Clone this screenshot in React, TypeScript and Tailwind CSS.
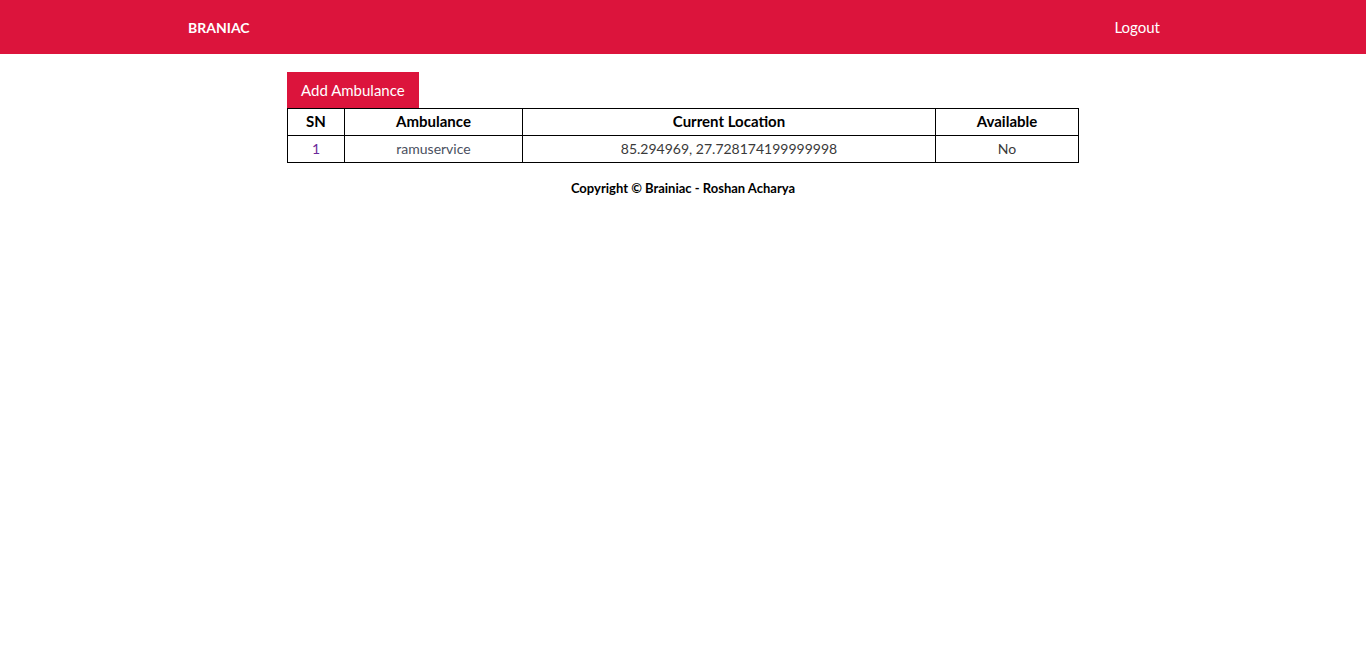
export default function App() {
  return (
    <div className="min-h-[665px] bg-white font-['Lato','Noto_Sans',sans-serif] text-black">
      <header className="flex h-[54px] items-center justify-between bg-[#dc143c] pl-[188px] pr-[206px] text-white">
        <span className="text-[14px] font-bold">BRANIAC</span>
        <span className="text-[15px]">Logout</span>
      </header>

      <main className="mx-auto mt-[18px] w-[792px]">
        <button className="h-[36px] bg-[#dc143c] px-[14px] text-[15px] text-white">Add Ambulance</button>
        <table className="w-full border-collapse text-center text-[14px] leading-[20px]">
          <thead>
            <tr className="h-[27px] text-[15px]">
              <th className="w-[57px] border border-black pb-[2px] font-bold">SN</th>
              <th className="w-[178px] border border-black pb-[2px] font-bold">Ambulance</th>
              <th className="w-[413px] border border-black pb-[2px] font-bold">Current Location</th>
              <th className="border border-black pb-[2px] font-bold">Available</th>
            </tr>
          </thead>
          <tbody>
            <tr className="h-[27px]">
              <td className="border border-black pb-px text-[#6b2a9a]">1</td>
              <td className="border border-black pb-px text-[#4a5060]">ramuservice</td>
              <td className="border border-black pb-px text-[#3a3a3a]">85.294969, 27.728174199999998</td>
              <td className="border border-black pb-px text-[#3a3a3a]">No</td>
            </tr>
          </tbody>
        </table>
        <p className="mt-[16px] text-center text-[13px] font-bold">Copyright © Brainiac - Roshan Acharya</p>
      </main>
    </div>
  );
}
